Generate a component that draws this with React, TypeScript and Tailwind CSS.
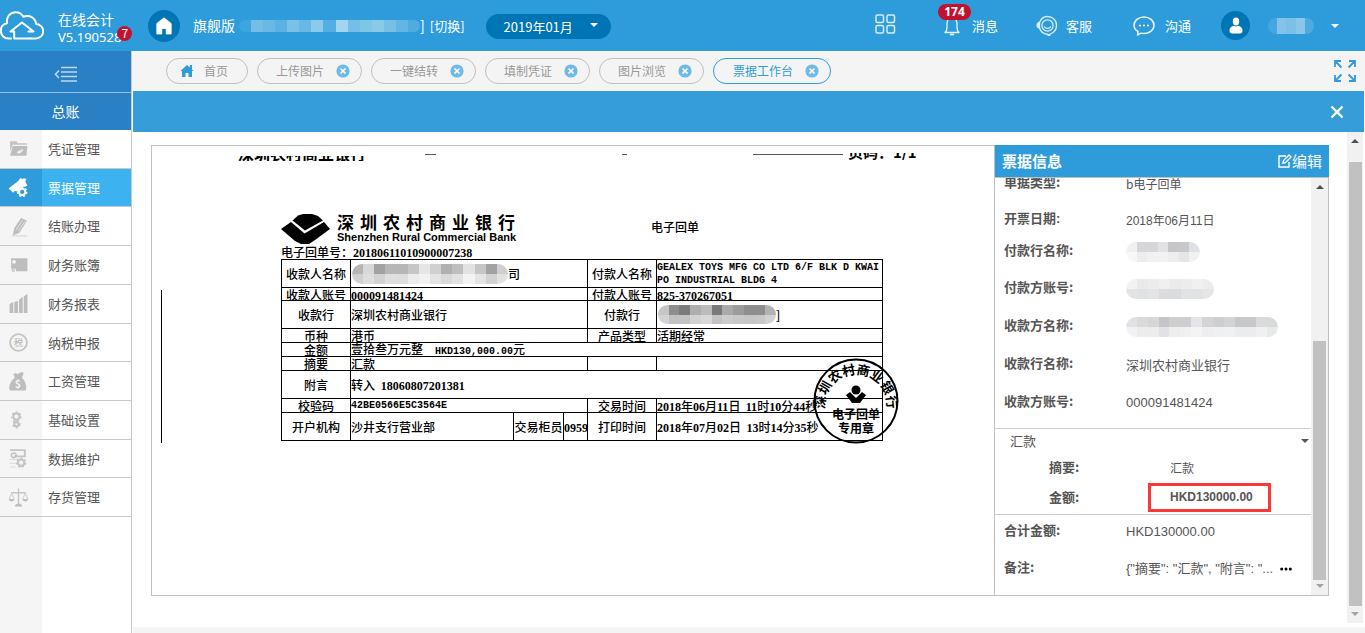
import React from "react";

const BLANK = "";

/* ---------- shared pieces ---------- */

function Mosaic({ rows, className = "" }: { rows: string[][]; className?: string }) {
  return (
    <span aria-hidden="true" className={`flex flex-col overflow-hidden rounded-full ${className}`}>
      {rows.map((row, i) => (
        <span key={i} className="flex flex-1">
          {row.map((c, j) => (
            <span key={j} className="flex-1" style={{ backgroundColor: c }} />
          ))}
        </span>
      ))}
    </span>
  );
}

function Caret({ className = "", up = false }: { className?: string; up?: boolean }) {
  return (
    <svg aria-hidden="true" viewBox="0 0 8 4" className={className} fill="currentColor">
      <path d={up ? "M0 4 4 0l4 4z" : "M0 0h8L4 4z"} />
    </svg>
  );
}

function CloseDot() {
  return (
    <svg viewBox="0 0 14 14" className="size-[14px]" aria-hidden="true">
      <circle cx="7" cy="7" r="6.6" fill="#6fbbe6" />
      <path d="M4.5 4.5l5 5m0-5l-5 5" stroke="#fff" strokeWidth="1.7" />
    </svg>
  );
}

/* ---------- header ---------- */

function Header() {
  return (
    <header className="flex h-[51px] shrink-0 items-center bg-[#2e9cdb] text-white">
      <div className="flex w-[132px] shrink-0 items-center">
        <svg viewBox="0 0 44 30" className="h-[30px] w-11" fill="none" stroke="#fff" strokeWidth="2" aria-hidden="true">
          <path
            d="M11 27.5H8.500C4 27.500 .8 24 .8 19.800c0-4 2.700-7 6.200-7.500C6.200 6 10 1.200 15.600 1.200c3.600 0 6.200 1.700 7.800 4.600 6-2.400 12 .8 12.700 7.300C40.500 13.600 43.200 16.500 43.200 20.200c0 4.100-3.200 7.300-7.400 7.300H14.200v-7h-3.700L22 11.500l11.500 9h-5"
            strokeLinejoin="round"
            strokeLinecap="round"
          />
        </svg>
        <div className="relative ml-[14px] mt-1 leading-[18px]">
          <p className="text-[14px]">在线会计</p>
          <p className="font-['Noto_Sans','Noto_Sans_CJK_SC',sans-serif] text-[13px]">V5.190528</p>
          <span className="absolute -right-[11px] top-[16px] flex size-[15px] items-center justify-center rounded-full bg-[#c1122f] text-[12px] leading-none">
            7
          </span>
        </div>
      </div>
      <button aria-label="首页" className="ml-4 flex size-8 shrink-0 items-center justify-center rounded-full bg-[#0075b6]">
        <svg viewBox="0 0 18 18" className="size-[18px]" fill="#fff" aria-hidden="true">
          <path d="M9 .8 1.800 6.500V17h5v-5.500h4.400V17h5V6.500z" stroke="#fff" strokeWidth=".8" strokeLinejoin="round" />
        </svg>
      </button>
      <p className="ml-[13px] flex items-center text-[14px]">
        旗舰版
        <Mosaic
          className="ml-1 h-3 w-[181px]"
          rows={[["#3fa5df", "#73bde6", "#6ab9e5", "#5bb2e2", "#7ac1e8", "#68b8e5", "#8bcaea", "#54aee1", "#a1d5f0", "#74bfe7", "#7cc6e6", "#8acae9", "#78bfe6", "#63b6e4", "#50acdf"]]}
        />
        ]
      </p>
      <button className="ml-[5px] text-[13px]">[切换]</button>
      <div className="relative ml-[21px]">
        <select
          aria-label="会计期间"
          className="h-[25px] w-[125px] appearance-none rounded-full bg-[#0075b6] pl-[18px] text-[13px] leading-[25px] text-white"
        >
          <option>2019年01月</option>
        </select>
        <Caret className="pointer-events-none absolute right-[13px] top-[10px] h-1 w-2" />
      </div>

      <div className="ml-auto flex items-center text-[13px]">
        <button aria-label="应用" className="mr-12">
          <svg viewBox="0 0 21 20" className="mb-1 h-5 w-[21px]" fill="none" stroke="#d5ecf9" strokeWidth="1.5" aria-hidden="true">
            <rect x="1" y="1" width="7.500" height="7.500" rx="1.500" />
            <rect x="12" y="1" width="7.500" height="7.500" rx="1.500" />
            <rect x="1" y="11.500" width="7.500" height="7.500" rx="1.500" />
            <rect x="12" y="11.500" width="7.500" height="7.500" rx="1.500" />
          </svg>
        </button>
        <button className="relative flex items-center gap-3">
          <svg viewBox="0 0 16 20" className="h-5 w-4" fill="none" stroke="#e3f2fb" strokeWidth="1.300" aria-hidden="true">
            <path d="M1 16.500h14c-1.600-1.400-2-2.800-2-5V7.500C13 4.500 11 2 8 2S3 4.500 3 7.500v4c0 2.200-.4 3.600-2 5z" strokeLinejoin="round" />
            <path d="M6 18.500h4" strokeWidth="1.800" />
          </svg>
          消息
          <span className="absolute -left-[6px] -top-[12px] flex h-4 w-[33px] items-center justify-center rounded-full bg-[#c1122f] font-['Open_Sans',sans-serif] text-[12px] font-bold leading-none">
            174
          </span>
        </button>
        <button className="ml-[38px] flex items-center gap-2">
          <svg viewBox="0 0 22 22" className="size-[22px]" fill="none" stroke="#d9edf9" strokeWidth="1.300" aria-hidden="true">
            <circle cx="11.500" cy="10.500" r="5.600" />
            <path d="M3.500 7.500C5 3.500 8 1.500 11.500 1.500c5 0 9 3.800 9 8.700 0 4.300-2.600 7.500-6.500 8.800" />
            <path d="M8 11.500c1.800 2.600 5.200 2.600 7 0" />
            <path d="M3.500 7.500v5.500C.3 13 .3 7.500 3.500 7.500z" fill="#d9edf9" />
            <path d="M3.500 13c1 3.500 4 6.200 9 6.500" />
            <path d="M11.500 20h3" strokeWidth="2" />
          </svg>
          客服
        </button>
        <button className="ml-[41px] flex items-center gap-[10px]">
          <svg viewBox="0 0 22 22" className="size-[22px]" aria-hidden="true">
            <path d="M5 16.500C2.500 15 1 12.700 1 10.200 1 5.500 5.500 2 11 2s10 3.500 10 8.200-4.500 8.300-10 8.300c-1 0-2-.1-3-.4L4.500 20z" fill="none" stroke="#eaf5fc" strokeWidth="1.500" strokeLinejoin="round" />
            <path d="M6 10.500h2m2 0h2m2 0h2" stroke="#fff" strokeWidth="1.400" />
          </svg>
          沟通
        </button>
        <button className="ml-[30px] flex items-center" aria-label="用户菜单">
          <span className="flex size-[29px] items-center justify-center rounded-full bg-[#0075b6]">
            <svg viewBox="0 0 14 17" className="h-[17px] w-[14px]" fill="#fff" aria-hidden="true">
              <ellipse cx="7" cy="4.500" rx="3.200" ry="4" />
              <path d="M.5 13.500C.5 10.500 2.500 9.200 5 8.700c1.300 1.100 2.700 1.100 4 0 2.500.5 4.500 1.800 4.500 4.800 0 2-1 3-2.500 3H3c-1.500 0-2.500-1-2.500-3z" />
            </svg>
          </span>
          <Mosaic
            className="ml-[18px] mr-[17px] h-4 w-[46px]"
            rows={[["#45a7df", "#84c3e9", "#7cbfe7", "#8ac5ea", "#4eabe0"]]}
          />
          <Caret className="mr-[26px] h-1 w-2" />
        </button>
      </div>
    </header>
  );
}

/* ---------- sidebar ---------- */

const gear = (cx: number, cy: number, r: number, color: string) => (
  <g>
    <circle cx={cx} cy={cy} r={r} fill="none" stroke={color} strokeWidth="2" />
    <circle cx={cx} cy={cy} r={r + 1.3} fill="none" stroke={color} strokeWidth="1.400" strokeDasharray="1.900 1.900" />
  </g>
);

const icons: React.ReactNode[] = [
  <g>
    <path d="M2 5V3h6l1.500 2H18v1.500H4.500L2 13z" fill="#c4c4c4" />
    <path d="M4.500 7.500h14L17.500 17H2z" fill="#bdbdbd" />
    <path d="M9.500 14l1.500-1.500m0 1.500 2.500-2.500" stroke="#eee" strokeWidth="1.800" strokeLinecap="round" />
  </g>,
  <g>
    <path d="M.5 11 9.500 4l2.500-3 1.500 1 2-.8 2 .8-1 2.500L18.500 8l-2 1.300c-3.500-.5-6 1.700-6.300 5L6.500 13 5 15z" fill="#fff" />
    {gear(13.5, 14.2, 3, "#fff")}
  </g>,
  <g>
    <path d="M4.500 18.500l1.500-7L12.500 2l5.500 2.500L11 16z" fill="#bdbdbd" />
    <path d="M7.500 13.500 13.800 4M10 14.500 16.200 5" stroke="#e8e8e8" strokeWidth=".8" />
    <path d="M4 19h14" stroke="#d2d2d2" />
  </g>,
  <g>
    <path d="M3 4h15.500v12.500H7.500V14H3z" fill="#bdbdbd" />
    <circle cx="5.800" cy="7.500" r="1.800" fill="#f5f5f5" />
    <path d="M3 14.500h3.500v2.500H4z" fill="#c9c9c9" />
  </g>,
  <g fill="#bdbdbd">
    <path d="M1.500 10.500l3.500-2V19H1.500zM6 8.500l3.500-1V19H6zM10.500 6.500l3.500-3V19h-3.500zM15 3l3.500-2v18H15z" />
  </g>,
  <g>
    <circle cx="10" cy="10" r="8" fill="none" stroke="#c4c4c4" strokeWidth="1.800" />
    <text x="10" y="13.300" fontSize="9" textAnchor="middle" fill="#b5b5b5">税</text>
  </g>,
  <g>
    <path d="M5 3l2-1 2 .8L13 1l2 1-1.800 4.500C17 9.500 18.500 17 16.500 18.500H2C0 17 1.500 10 6.500 6.500z" fill="#bdbdbd" />
    <text x="9.300" y="16.500" fontSize="10" fontWeight="bold" textAnchor="middle" fill="#f5f5f5">$</text>
  </g>,
  <g>
    {gear(8, 7.2, 3, "#c4c4c4")}
    {gear(8, 14.5, 2, "#c4c4c4")}
  </g>,
  <g>
    <path d="M2 2h14v6H5.500" fill="none" stroke="#c4c4c4" strokeWidth="1.800" />
    <circle cx="5.500" cy="7" r="2.300" fill="none" stroke="#c4c4c4" strokeWidth="1.500" />
    <path d="M1.500 11h8M1.500 14.500h6M1.500 18h6" stroke="#dcdcdc" />
    {gear(12.5, 14, 3, "#c4c4c4")}
  </g>,
  <g>
    <path d="M10 1.500V16M3 5.500h14" stroke="#c4c4c4" strokeWidth="1.300" />
    <path d="M1 11.500 3.500 6 6 11.500M14 11.500 16.500 6l2.500 5.500" fill="none" stroke="#d2d2d2" />
    <path d="M.8 11.500h5.400c0 3-5.400 3-5.400 0zM13.800 11.500h5.400c0 3-5.400 3-5.400 0zM6.500 18.500c0-1.500 1.500-2.500 3.500-3 2 .5 3.500 1.500 3.500 3z" fill="#bdbdbd" />
  </g>,
];

const menu = ["凭证管理", "票据管理", "结账办理", "财务账簿", "财务报表", "纳税申报", "工资管理", "基础设置", "数据维护", "存货管理"];

function Sidebar() {
  return (
    <aside className="flex w-[132px] shrink-0 flex-col border-r border-[#c8c8c8] bg-white">
      <button aria-label="收起菜单" className="flex h-[42px] items-center justify-center border-b border-[#94c1e6] bg-[#2a80c4]">
        <svg viewBox="0 0 24 16" className="mt-1 h-4 w-6" fill="none" stroke="#bcd8ef" strokeWidth="1.600" aria-hidden="true">
          <path d="M7 1.500h16M7 6h16M7 10.500h16M7 15h16M5 4.500 1.500 8.200 5 12" />
        </svg>
      </button>
      <h2 className="flex h-[37px] items-center justify-center bg-[#2a80c4] text-[14px] text-white">总账</h2>
      <nav className="grid h-[387px] grid-rows-10">
        {menu.map((name, i) => (
          <a
            key={name}
            href="#"
            className={`flex border-b border-[#c8c8c8] text-[13px] ${i === 1 ? "bg-[#3db2f1] text-white" : "bg-white text-[#555]"}`}
          >
            <span className={`flex w-[42px] items-center pl-2 ${i === 1 ? "bg-[#2e9cdb]" : "bg-[#f5f5f5]"}`}>
              <svg viewBox="0 0 20 20" className="size-[21px]" aria-hidden="true">
                {icons[i]}
              </svg>
            </span>
            <span className="flex items-center pl-[6px]">{name}</span>
          </a>
        ))}
      </nav>
      <div className="w-[42px] flex-1 bg-[#f5f5f5]" />
    </aside>
  );
}

/* ---------- tabs ---------- */

function Tabs() {
  const tabs = ["上传图片", "一键结转", "填制凭证", "图片浏览", "票据工作台"];
  return (
    <div className="flex h-10 shrink-0 items-center bg-[#f4f4f4] pl-[34px] pr-2 text-[12px] text-[#999]">
      <div className="flex gap-[9px]">
        <button className="flex h-[26px] items-center rounded-full border border-[#c0c0c0] pl-[13px] pr-[19px]">
          <svg viewBox="0 0 14 14" className="mr-[10px] size-[14px]" fill="#2e9cdb" aria-hidden="true">
            <path d="M7 1 .5 7H2v6h3.500V9h3v4H12V7h1.500L12 5.600V1H9.800v2.500z" />
          </svg>
          首页
        </button>
        {tabs.map((t, i) => (
          <div
            key={t}
            className={`flex h-[26px] items-center gap-3 rounded-full border pr-[11px] ${
              i === 4 ? "border-[#2e9cdb] pl-[19px] text-[#2e9cdb]" : "border-[#c0c0c0] pl-[18px]"
            }`}
          >
            <button>{t}</button>
            <button aria-label={`关闭${t}`}>
              <CloseDot />
            </button>
          </div>
        ))}
      </div>
      <button aria-label="全屏" className="ml-auto">
        <svg viewBox="0 0 24 24" className="size-6" fill="none" stroke="#3399e6" strokeWidth="1.800" aria-hidden="true">
          <path d="M2 8V2h6M2 2l6.500 6.500M16 2h6v6M22 2l-6.500 6.500M2 16v6h6M2 22l6.500-6.500M22 16v6h-6M22 22l-6.500-6.500" />
        </svg>
      </button>
    </div>
  );
}

/* ---------- scanned receipt ---------- */

function Emblem({ className }: { className: string }) {
  return (
    <svg viewBox="0 0 49 30" className={className} aria-hidden="true">
      <path d="M17 1.500 22 0h9l6 2 5 4.500L24 16.500 11.500 6.500z" />
      <path d="M10 8 23.500 19.500 43 8l6 7-15 11-6 4h-8l-6-3L0 15z" />
    </svg>
  );
}

const lab = "border border-black text-center";
const val = "border border-black text-left";
const mono = "font-['Liberation_Mono',monospace] text-[10px] font-bold";

function N({ children }: { children: React.ReactNode }) {
  return <span className="font-['Liberation_Serif',serif] text-[12px] font-bold leading-[8px]">{children}</span>;
}

function Receipt() {
  return (
    <section className="min-w-[740px] flex-1 overflow-hidden pl-[9px] pt-[7px] text-black">
      <div className="flex h-2 items-start pl-[77px] text-[16px] font-bold leading-4">
        <span className="mt-[3px] flex h-[5px] items-end overflow-hidden">深圳农村商业银行</span>
        <span className="ml-[59px] mt-px h-px w-[11px] bg-[#555]" />
        <span className="ml-[186px] mt-px h-px w-[5px] bg-[#555]" />
        <span className="ml-[126px] mt-px h-px w-[90px] bg-[#555]" />
        <span className="ml-[5px] flex h-[7px] items-end overflow-hidden text-[15px]">页码：1/1</span>
      </div>
      <div className="flex">
        <div className="mt-[129px] h-[153px] w-px bg-black" />
        <div className="ml-[119px] mt-[52px] w-[602px] font-medium">
          <div className="flex items-start">
            <Emblem className="mt-px h-[30px] w-[49px]" />
            <div className="ml-[7px] w-[178px]">
              <p className="flex justify-between text-[17px] font-bold leading-[18px]">
                {[..."深圳农村商业银行"].map((c, i) => (
                  <span key={i}>{c}</span>
                ))}
              </p>
              <p className="whitespace-nowrap font-['Liberation_Sans',sans-serif] text-[11px] font-bold leading-3">
                Shenzhen Rural Commercial Bank
              </p>
            </div>
            <p className="ml-[136px] mt-2 text-[12px] leading-3">电子回单</p>
          </div>
          <p className="whitespace-nowrap text-[12px] leading-[15px]">
            电子回单号：<N>20180611010900007238</N>
          </p>
          <div className="relative">
            <table className="w-full table-fixed border-collapse whitespace-nowrap text-[12px] leading-[11px] [&_td]:p-0 [&_th]:p-0 [&_th]:font-medium">
              <colgroup>
                <col className="w-[69px]" />
                <col className="w-[163px]" />
                <col className="w-[50px]" />
                <col className="w-[24px]" />
                <col className="w-[69px]" />
                <col />
              </colgroup>
              <tbody>
                <tr className="h-7">
                  <th className={lab}>收款人名称</th>
                  <td className={val} colSpan={3}>
                    <span className="flex items-center">
                      <Mosaic
                        className="ml-px h-5 w-[156px]"
                        rows={[
                          ["#b5b5b5", "#d8d8d8", "#a2a2a2", "#b6b6b6", "#b6b6b6", "#c6c6c6", "#e6e6e6", "#d0d0d0", "#b0b0b0", "#bebebe", "#e2e2e2", "#c6c6c6", "#a2a2a2", "#cfcfcf"],
                          ["#d0d0d0", "#dedede", "#d2d2d2", "#dfdfdf", "#dedede", "#ececec", "#f2f2f2", "#e4e4e4", "#dadada", "#e2e2e2", "#f3f3f3", "#e4e4e4", "#d2d2d2", "#e2e2e2"],
                        ]}
                      />
                      司
                    </span>
                  </td>
                  <th className={lab}>付款人名称</th>
                  <td className={`${val} ${mono} leading-[13px]`}>
                    GEALEX TOYS MFG CO LTD 6/F BLK D KWAI
                    <br />
                    PO INDUSTRIAL BLDG 4
                  </td>
                </tr>
                <tr className="h-[13px]">
                  <th className={lab}>收款人账号</th>
                  <td className={val} colSpan={3}>
                    <N>000091481424</N>
                  </td>
                  <th className={lab}>付款人账号</th>
                  <td className={val}>
                    <N>825-370267051</N>
                  </td>
                </tr>
                <tr className="h-7">
                  <th className={lab}>收款行</th>
                  <td className={val} colSpan={3}>深圳农村商业银行</td>
                  <th className={lab}>付款行</th>
                  <td className={val}>
                    <span className="flex items-center">
                      <Mosaic
                        className="ml-px h-[19px] w-[118px]"
                        rows={[
                          ["#c6c6c6", "#8e8e8e", "#7c7c7c", "#aeaeae", "#bcbcbc", "#7a7a7a", "#aaaaaa", "#9c9c9c", "#8e8e8e", "#8e8e8e", "#b2b2b2"],
                          ["#d2d2d2", "#c2c2c2", "#c4c4c4", "#d2d2d2", "#d8d8d8", "#c4c4c4", "#cccccc", "#c8c8c8", "#c6c6c6", "#c8c8c8", "#d2d2d2"],
                        ]}
                      />
                      ]
                    </span>
                  </td>
                </tr>
                <tr className="h-[14px]">
                  <th className={lab}>币种</th>
                  <td className={val} colSpan={3}>港币</td>
                  <th className={lab}>产品类型</th>
                  <td className={val}>活期经常</td>
                </tr>
                <tr className="h-[14px]">
                  <th className={lab}>金额</th>
                  <td className={val} colSpan={5}>
                    壹拾叁万元整<span className={`${mono} ml-3 leading-[8px]`}>HKD130,000.00</span>元
                  </td>
                </tr>
                <tr className="h-[14px]">
                  <th className={lab}>摘要</th>
                  <td className={val} colSpan={3}>汇款</td>
                  <th className={lab}>{BLANK}</th>
                  <td className={val}>{BLANK}</td>
                </tr>
                <tr className="h-7">
                  <th className={lab}>附言</th>
                  <td className={val} colSpan={5}>
                    转入 <N>&nbsp;18060807201381</N>
                  </td>
                </tr>
                <tr className="h-[14px]">
                  <th className={lab}>校验码</th>
                  <td className={`${val} ${mono}`} colSpan={3}>42BE0566E5C3564E</td>
                  <th className={lab}>交易时间</th>
                  <td className={val}>
                    <N>2018</N>年<N>06</N>月<N>11</N>日&nbsp; <N>11</N>时<N>10</N>分<N>44</N>秒
                  </td>
                </tr>
                <tr className="h-7">
                  <th className={lab}>开户机构</th>
                  <td className={val}>沙井支行营业部</td>
                  <th className={lab}>交易柜员</th>
                  <td className={val}>
                    <N>0959</N>
                  </td>
                  <th className={lab}>打印时间</th>
                  <td className={val}>
                    <N>2018</N>年<N>07</N>月<N>02</N>日&nbsp; <N>13</N>时<N>14</N>分<N>35</N>秒
                  </td>
                </tr>
              </tbody>
            </table>
            <svg viewBox="0 0 86 86" className="absolute -bottom-[3px] -right-4 size-[86px] font-bold" aria-label="电子回单专用章">
              <defs>
                <path id="seal-arc" d="M12.500 53A31 31 0 1 1 73.500 53" />
              </defs>
              <circle cx="43" cy="43" r="41.500" fill="none" stroke="#000" strokeWidth="2" />
              <text fontSize="13">
                <textPath href="#seal-arc" startOffset="50%" textAnchor="middle">
                  深圳农村商业银行
                </textPath>
              </text>
              <circle cx="43" cy="32" r="4.500" />
              <path d="M33 37l4-3 6 6 6-6 4 3-6 8h-8z" />
              <text x="43" y="61" fontSize="12" textAnchor="middle">电子回单</text>
              <text x="43" y="75" fontSize="12" textAnchor="middle">专用章</text>
            </svg>
          </div>
        </div>
      </div>
    </section>
  );
}

/* ---------- info panel ---------- */

function Field({ label, className = "h-[38px]", children }: { label: string; className?: string; children: React.ReactNode }) {
  return (
    <div className={`flex items-center pl-[9px] ${className}`}>
      <dt className="w-[122px] shrink-0 font-bold">{label}</dt>
      <dd className="min-w-0 pt-[3px]">{children}</dd>
    </div>
  );
}

const nums = "font-['Liberation_Sans','Noto_Sans_CJK_SC',sans-serif]";

function InfoPanel() {
  return (
    <section className="flex w-[334px] shrink-0 flex-col border-l border-[#c0c0c0]">
      <div className="-mr-px -mt-px flex h-8 shrink-0 items-center justify-between bg-[#2e9cdb] pl-[7px] pr-[7px] text-[15px] text-white">
        <h3 className="font-bold">票据信息</h3>
        <button className="flex items-center">
          <svg viewBox="0 0 14 14" className="size-[14px]" fill="none" stroke="#fff" strokeWidth="1.400" aria-hidden="true">
            <path d="M8 2H1v11h10V8" />
            <path d="M5 9l.5-2.500L11 1l2 2-5.500 5.500z" />
          </svg>
          编辑
        </button>
      </div>
      <div className="flex min-h-0 flex-1 border-t border-[#c0c0c0]">
        <div className="h-[416px] min-w-0 flex-1 overflow-hidden text-[13px] leading-[18px] text-[#555]">
          <dl className="-mt-5">
            <Field label="单据类型:" className="h-12">
              <span className="text-[12px]">b电子回单</span>
            </Field>
            <Field label="开票日期:" className={`h-[26px] ${nums}`}>
              <span className="text-[12px]">2018年06月11日</span>
            </Field>
            <Field label="付款行名称:" className="h-9">
              <Mosaic
                className="h-5 w-[74px]"
                rows={[["#f0f0f0", "#d6d6d8", "#d6d6d8", "#e0e2e4", "#c6c6c8", "#c8c8ca", "#dde1e5"], ["#f8f8f8", "#ededef", "#f0f2f2", "#f2f2f3", "#ededee", "#e6e6e6", "#f3f1f0"]]}
              />
            </Field>
            <Field label="付款方账号:">
              <Mosaic
                className="h-5 w-[88px]"
                rows={[["#f2f2f3", "#e9e9eb", "#ececec", "#f0f0f0", "#eaeaea", "#ececee", "#f0f0f0", "#ececec"], ["#e3e3e5", "#e0e2e4", "#e2e4e5", "#dcdcde", "#dadde0", "#e2e3e4", "#e0e2e4", "#e4e5e6"]]}
              />
            </Field>
            <Field label="收款方名称:">
              <Mosaic
                className="h-5 w-[152px]"
                rows={[
                  ["#e2e0e2", "#dadada", "#d6d6d6", "#c6c4c8", "#cecece", "#cecece", "#e2e6e8", "#d4d4d6", "#ceced2", "#d2d4d6", "#c6c8ca", "#c6c8ca", "#dadadc", "#d8dad8"],
                  ["#f2f2f4", "#ececec", "#ececee", "#e0e2e5", "#ededef", "#f0f0f0", "#f4f4f4", "#eeeef0", "#f0f0f2", "#f0f2f2", "#ececec", "#ececee", "#f0f0f0", "#e8e9e9"],
                ]}
              />
            </Field>
            <Field label="收款行名称:">深圳农村商业银行</Field>
            <Field label="收款方账号:">
              <span className={nums}>000091481424</span>
            </Field>
            <div className="mt-2 border-y border-[#ccc]">
              <div className="flex h-6 items-center justify-between pl-[15px] pr-[2px]">
                <button>汇款</button>
                <Caret className="h-1 w-2" />
              </div>
              <div className="flex h-[27px] items-center pl-[54px]">
                <dt className="w-[99px] shrink-0 font-bold">摘要:</dt>
                <dd className="pl-[22px] pt-[3px] text-[12px]">汇款</dd>
              </div>
              <div className="flex h-[34px] items-center pl-[54px]">
                <dt className="w-[99px] shrink-0 font-bold">金额:</dt>
                <dd className={`flex h-[29px] w-[123px] items-center border-[3px] border-[#f93838] pl-[19px] text-[12px] font-bold ${nums}`}>
                  HKD130000.00
                </dd>
              </div>
            </div>
            <Field label="合计金额:" className="h-[30px]">
              <span className={nums}>HKD130000.00</span>
            </Field>
            <Field label="备注:" className="h-11">
              <span className={`flex items-center ${nums}`}>
                <span className="w-[154px] whitespace-nowrap">{'{"摘要": "汇款", "附言": "...'}</span>
                <button aria-label="查看全部备注">
                  <svg viewBox="0 0 12 4" className="h-1 w-3" aria-hidden="true">
                    <circle cx="1.700" cy="2" r="1.500" />
                    <circle cx="6" cy="2" r="1.500" />
                    <circle cx="10.300" cy="2" r="1.500" />
                  </svg>
                </button>
              </span>
            </Field>
          </dl>
        </div>
        <div aria-hidden="true" className="flex w-[17px] flex-col items-center justify-between bg-[#f1f1f1] py-[7px]">
          <Caret up className="h-1 w-2 text-[#505050]" />
          <div className="mb-1 mt-auto h-[239px] w-[13px] bg-[#c1c1c1]" />
          <Caret className="h-1 w-2 text-[#a3a3a3]" />
        </div>
      </div>
    </section>
  );
}

/* ---------- page ---------- */

export default function App() {
  return (
    <div className="flex min-h-screen flex-col bg-white font-['Noto_Sans_CJK_SC',sans-serif]">
      <Header />
      <div className="flex flex-1">
        <Sidebar />
        <div className="flex min-w-0 flex-1 flex-col">
          <Tabs />
          <div className="ml-px mr-px flex h-[41px] shrink-0 items-center justify-end bg-[#359dd9] pr-5">
            <button aria-label="关闭">
              <svg viewBox="0 0 14 14" className="size-[14px]" stroke="#fff" strokeWidth="2.400" aria-hidden="true">
                <path d="M1.500 1.500l11 11m0-11l-11 11" />
              </svg>
            </button>
          </div>
          <main className="ml-px flex flex-1 bg-white pl-[18px] pr-[2px]">
            <div className="mb-[31px] mt-[13px] flex min-w-0 flex-1 border border-[#c0c0c0]">
              <Receipt />
              <InfoPanel />
            </div>
            <div aria-hidden="true" className="mb-1 ml-[18px] flex w-4 flex-col items-center bg-[#f1f1f1] py-[7px]">
              <Caret up className="h-1 w-2 text-[#505050]" />
              <div className="mb-[6px] mt-[19px] w-[13px] flex-1 bg-[#c1c1c1]" />
              <Caret className="h-1 w-2 text-[#a3a3a3]" />
            </div>
          </main>
          <footer className="ml-px h-[6px] shrink-0 bg-[#f4f4f4]" />
        </div>
      </div>
    </div>
  );
}
